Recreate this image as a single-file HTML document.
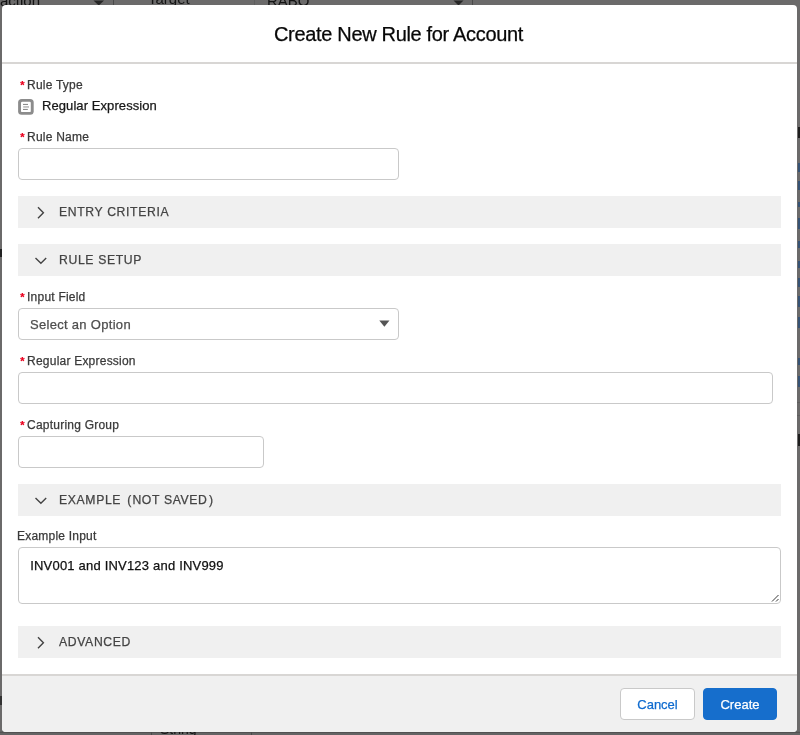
<!DOCTYPE html>
<html><head><meta charset="utf-8">
<style>
*{box-sizing:border-box;margin:0;padding:0}
html,body{width:800px;height:735px;overflow:hidden}
body{background:#6b6a6a;font-family:"Liberation Sans",sans-serif;position:relative;color:#181818}
.a{position:absolute;white-space:nowrap}
.bg{will-change:transform;position:absolute;left:0;top:0;width:800px;height:735px}
.bgtxt{color:#141414;font-size:15px}
.modal{will-change:transform;-webkit-text-stroke-width:0.25px;position:absolute;left:2px;top:5px;width:795px;height:726.5px;background:#fff;border-radius:4px;overflow:hidden}
.hdr-b{position:absolute;left:0;top:57px;width:795px;height:2px;background:#d8d6d4}
.title{position:absolute;left:-1px;width:795px;text-align:center;font-size:20px;line-height:26px;top:16px;letter-spacing:-0.33px;color:#080808}
.lbl{font-size:12px;line-height:18px;color:#3a3a3a;letter-spacing:0.22px}
.req{color:#ea001e;display:inline-block;margin:0 2.6px 0 2.2px;font-weight:bold;letter-spacing:0;font-size:11px;position:relative;top:-0.5px}
.inp{position:absolute;border:1px solid #c9c9c9;border-radius:4px;background:#fff}
.bar{position:absolute;left:16px;width:763px;height:32px;background:#f0f0f0}
.bar .t{position:absolute;left:41px;top:7px;font-size:12.2px;line-height:18px;letter-spacing:0.65px;color:#444}
.bar svg{position:absolute}
.footer{position:absolute;left:0;top:669px;width:795px;height:58px;background:#f0f0f0;border-top:2px solid #d8d6d4}
.btn{position:absolute;top:12px;height:32px;border-radius:4px;font-size:13px;line-height:32px;text-align:center}
</style></head>
<body>
<!-- background page hints -->
<div class="bg">
<div class="a bgtxt" style="left:0px;top:-8px">action</div>
<svg class="a" style="left:93px;top:0" width="12" height="5" viewBox="0 0 12 5"><path d="M0.5 0.6 L11 0.6 L5.75 5.5 Z" fill="#262626"/></svg>
<div class="a" style="left:113px;top:0;width:1px;height:5px;background:#4a4a4a"></div>
<div class="a bgtxt" style="left:148px;top:-10px">Target</div>
<div class="a" style="left:254px;top:0;width:1px;height:5px;background:#5e5e5e"></div>
<div class="a bgtxt" style="left:267px;top:-8px">RABO</div>
<svg class="a" style="left:453px;top:0" width="12" height="5" viewBox="0 0 12 5"><path d="M0.5 0.6 L10.5 0.6 L5.5 5.5 Z" fill="#262626"/></svg>
<div class="a" style="left:472px;top:0;width:1px;height:5px;background:#4a4a4a"></div>
<div class="a" style="left:0;top:249px;width:1.5px;height:8px;background:#222"></div>
<div class="a" style="left:0;top:696px;width:1.5px;height:9px;background:#333"></div>
<div class="a" style="left:0;top:731px;width:800px;height:4px;background:#646464"></div>
<div class="a" style="left:0;top:731.5px;width:800px;height:1.5px;background:#525252"></div>
<div class="a" style="left:797.5px;top:127px;width:2.5px;height:11.0px;background:#111;opacity:0.85"></div>
<div class="a" style="left:797.5px;top:163px;width:2.5px;height:9.0px;background:#1f4a7a;opacity:0.7"></div>
<div class="a" style="left:797.5px;top:181px;width:2.5px;height:9.0px;background:#1f4a7a;opacity:0.7"></div>
<div class="a" style="left:797.5px;top:202px;width:2.5px;height:4.5px;background:#1f4a7a;opacity:0.7"></div>
<div class="a" style="left:797.5px;top:218px;width:2.5px;height:11.0px;background:#1f4a7a;opacity:0.7"></div>
<div class="a" style="left:797.5px;top:241px;width:2.5px;height:7.0px;background:#1f4a7a;opacity:0.7"></div>
<div class="a" style="left:797.5px;top:261px;width:2.5px;height:7.0px;background:#1f4a7a;opacity:0.7"></div>
<div class="a" style="left:797.5px;top:277.5px;width:2.5px;height:9.0px;background:#1f4a7a;opacity:0.7"></div>
<div class="a" style="left:797.5px;top:295.5px;width:2.5px;height:11.5px;background:#1f4a7a;opacity:0.7"></div>
<div class="a" style="left:797.5px;top:316.7px;width:2.5px;height:11.5px;background:#1f4a7a;opacity:0.7"></div>
<div class="a" style="left:797.5px;top:358.4px;width:2.5px;height:6.6px;background:#1f4a7a;opacity:0.7"></div>
<div class="a" style="left:797.5px;top:376px;width:2.5px;height:11.3px;background:#1f4a7a;opacity:0.7"></div>
<div class="a" style="left:797.5px;top:434px;width:2.5px;height:11.7px;background:#111;opacity:0.85"></div>
<div class="a" style="left:797px;top:402px;width:3px;height:1px;background:#5e5e5e"></div>
<div class="a" style="left:797px;top:415px;width:3px;height:1px;background:#5e5e5e"></div>
<div class="a" style="left:151px;top:731px;width:1px;height:4px;background:#4a4a4a"></div>
<div class="a bgtxt" style="left:160px;top:721px;font-size:14px">String</div>
<div class="a" style="left:251px;top:731px;width:1px;height:4px;background:#4a4a4a"></div>
</div>
<div class="modal">
  <div class="title">Create New Rule for Account</div>
  <div class="hdr-b"></div>

  <div class="a lbl" style="left:16px;top:71px"><span class="req">*</span>Rule Type</div>
  <svg class="a" style="left:16px;top:94px" width="16" height="16" viewBox="0 0 16 16">
    <rect x="0.1" y="0" width="15.6" height="15.8" rx="3.6" fill="#8c8c8c"/>
    <rect x="3" y="2.8" width="9.8" height="10.3" rx="1.2" fill="#fff"/>
    <rect x="5" y="4.9" width="5" height="1.1" fill="#8c8c8c"/>
    <rect x="5.2" y="7.3" width="5.8" height="1.3" fill="#aaa"/>
    <rect x="5" y="9.9" width="4.8" height="1.1" fill="#8c8c8c"/>
  </svg>
  <div class="a" style="left:40px;top:91px;font-size:13px;line-height:19px;letter-spacing:0.08px;color:#181818">Regular Expression</div>

  <div class="a lbl" style="left:16px;top:123px"><span class="req">*</span>Rule Name</div>
  <div class="inp" style="left:16px;top:143px;width:381px;height:32px"></div>

  <div class="bar" style="top:191px">
    <svg style="left:18px;top:9px" width="12" height="14" viewBox="0 0 12 14"><path d="M2 2.3 L7.4 7.8 L2 13.3" fill="none" stroke="#444" stroke-width="1.4"/></svg>
    <div class="t">ENTRY CRITERIA</div>
  </div>
  <div class="bar" style="top:239px">
    <svg style="left:16px;top:12px" width="14" height="12" viewBox="0 0 14 12"><path d="M1.5 2 L6.9 7.3 L12.2 2" fill="none" stroke="#444" stroke-width="1.4"/></svg>
    <div class="t">RULE SETUP</div>
  </div>

  <div class="a lbl" style="left:16px;top:283px"><span class="req">*</span>Input Field</div>
  <div class="inp" style="left:16px;top:303px;width:381px;height:32px">
    <div class="a" style="left:11px;top:6px;font-size:13px;line-height:19px;letter-spacing:0.3px;color:#4e4e4e">Select an Option</div>
    <svg class="a" style="left:359.6px;top:11.4px" width="11" height="7" viewBox="0 0 11 7"><path d="M0.3 0.6 L10.5 0.6 L5.4 6.7 Z" fill="#555"/></svg>
  </div>

  <div class="a lbl" style="left:16px;top:347px"><span class="req">*</span>Regular Expression</div>
  <div class="inp" style="left:16px;top:367px;width:755px;height:32px"></div>

  <div class="a lbl" style="left:16px;top:411px"><span class="req">*</span>Capturing Group</div>
  <div class="inp" style="left:16px;top:431px;width:246px;height:32px"></div>

  <div class="bar" style="top:479px">
    <svg style="left:16px;top:12px" width="14" height="12" viewBox="0 0 14 12"><path d="M1.5 2 L6.9 7.3 L12.2 2" fill="none" stroke="#444" stroke-width="1.4"/></svg>
    <div class="t">EXAMPLE <span style="margin-left:2px">(</span><span style="margin-left:0.5px">NOT SAVED</span><span style="margin-left:1.5px">)</span></div>
  </div>

  <div class="a lbl" style="left:15px;top:522px">Example Input</div>
  <div class="inp" style="left:16px;top:542px;width:763px;height:57px">
    <div class="a" style="left:11.2px;top:8px;font-size:13px;line-height:19px;letter-spacing:0.2px;color:#111">INV001 and INV123 and INV999</div>
    <svg class="a" style="left:751px;top:45px" width="10" height="10" viewBox="0 0 10 10"><path d="M2 8.5 L8.5 2 M6 8.5 L8.5 6" stroke="#3a3a3a" stroke-width="1" fill="none"/></svg>
  </div>

  <div class="bar" style="top:621px">
    <svg style="left:18px;top:9px" width="12" height="14" viewBox="0 0 12 14"><path d="M2 2.3 L7.4 7.8 L2 13.3" fill="none" stroke="#444" stroke-width="1.4"/></svg>
    <div class="t">ADVANCED</div>
  </div>

  <div class="footer">
    <div class="btn" style="left:618px;width:75px;background:#fff;border:1px solid #c9c9c9;color:#0f6bcf">Cancel</div>
    <div class="btn" style="left:701px;width:74px;background:#166ecc;border:1px solid #166ecc;color:#fff">Create</div>
  </div>
</div>
</body></html>
